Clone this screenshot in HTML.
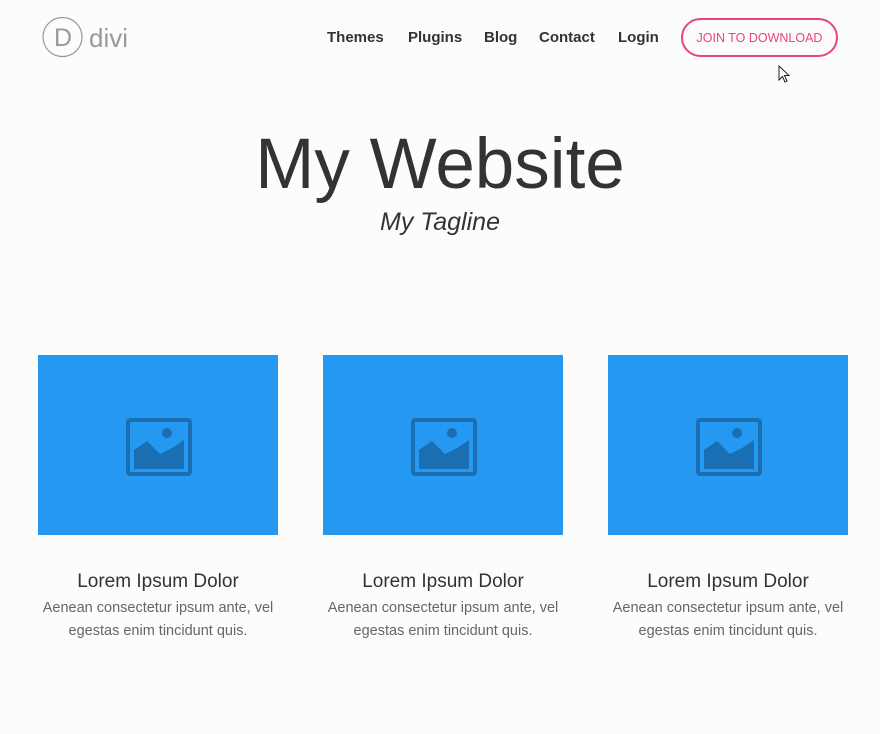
<!DOCTYPE html>
<html><head><meta charset="utf-8"><style>
*{margin:0;padding:0;box-sizing:border-box}
body{width:880px;height:734px;background:#fcfcfb;font-family:"Liberation Sans",sans-serif;position:relative;overflow:hidden;color:#333}
.nav a{position:absolute;top:29px;font-size:15px;font-weight:bold;color:#333;text-decoration:none}
.btn{position:absolute;left:681px;top:18px;width:157px;height:39px;border:2px solid #e8457a;border-radius:20px;color:#e8457a;font-size:12.5px;text-align:center;line-height:36px;}
h1{position:absolute;top:124px;left:0;width:880px;text-align:center;font-weight:normal;font-size:71px;color:#333}
.tag{position:absolute;top:208px;left:0;width:880px;text-align:center;font-style:italic;font-size:25px;color:#333}
.card{position:absolute;top:355px;width:240px}
.img{width:240px;height:180px;background:#2599f2;position:relative}
.img svg{position:absolute;left:88px;top:63px}
.t{margin-top:36px;text-align:center;font-size:19px;color:#333;white-space:nowrap}
.d{margin-top:4px;margin-left:-10px;width:260px;text-align:center;font-size:14.5px;line-height:23px;color:#666}
</style></head><body>
<svg style="position:absolute;left:42px;top:16px" width="95" height="44">
<circle cx="20.5" cy="21" r="19.5" fill="none" stroke="#999" stroke-width="1.2"/>
<text x="12" y="30" font-family="Liberation Sans" font-size="25" fill="#999">D</text>
<text x="47" y="31" font-family="Liberation Sans" font-size="26" fill="#999">divi</text>
</svg>
<div class="nav">
<a style="left:327px">Themes</a><a style="left:408px">Plugins</a><a style="left:484px">Blog</a><a style="left:539px">Contact</a><a style="left:618px">Login</a>
</div>
<div class="btn">JOIN TO DOWNLOAD</div>
<svg style="position:absolute;left:778px;top:65px" width="14" height="20"><path d="M1 1 L1 15 L4.5 11.5 L7 17 L9 16 L6.5 10.5 L11 10.5 Z" fill="#fff" stroke="#222" stroke-width="1"/></svg>
<h1>My Website</h1>
<div class="tag">My Tagline</div>
<div class="card" style="left:38px"><div class="img"><svg width="66" height="58"><rect x="2" y="2" width="62" height="54" rx="2" fill="none" stroke="#1a6fb3" stroke-width="4"/><path d="M8 51 L8 32 L21 23 L34 36 L46 30 L58 22 L58 51 Z" fill="#1a6fb3"/><circle cx="41" cy="15" r="5" fill="#1a6fb3"/></svg></div><div class="t">Lorem Ipsum Dolor</div><div class="d">Aenean consectetur ipsum ante, vel<br>egestas enim tincidunt quis.</div></div>
<div class="card" style="left:323px"><div class="img"><svg width="66" height="58"><rect x="2" y="2" width="62" height="54" rx="2" fill="none" stroke="#1a6fb3" stroke-width="4"/><path d="M8 51 L8 32 L21 23 L34 36 L46 30 L58 22 L58 51 Z" fill="#1a6fb3"/><circle cx="41" cy="15" r="5" fill="#1a6fb3"/></svg></div><div class="t">Lorem Ipsum Dolor</div><div class="d">Aenean consectetur ipsum ante, vel<br>egestas enim tincidunt quis.</div></div>
<div class="card" style="left:608px"><div class="img"><svg width="66" height="58"><rect x="2" y="2" width="62" height="54" rx="2" fill="none" stroke="#1a6fb3" stroke-width="4"/><path d="M8 51 L8 32 L21 23 L34 36 L46 30 L58 22 L58 51 Z" fill="#1a6fb3"/><circle cx="41" cy="15" r="5" fill="#1a6fb3"/></svg></div><div class="t">Lorem Ipsum Dolor</div><div class="d">Aenean consectetur ipsum ante, vel<br>egestas enim tincidunt quis.</div></div>
</body></html>
